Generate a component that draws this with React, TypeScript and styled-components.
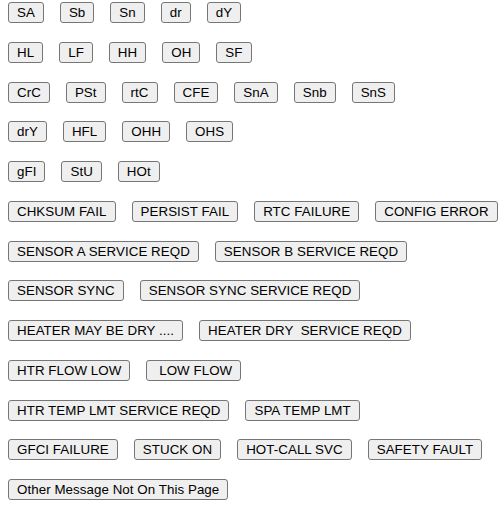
import React from 'react';
import styled, {createGlobalStyle} from 'styled-components';

const GlobalStyle = createGlobalStyle`
  body {
    margin: 0;
    background: #ffffff;
  }
`;

const Page = styled.div`
  display: flex;
  flex-direction: column;
  gap: 18.75px;
  padding: 2px 8px;
  font-family: 'Liberation Sans', Arial, sans-serif;
`;

const Row = styled.div`
  display: flex;
  gap: 16px;
`;

const MsgButton = styled.button`
  height: 21px;
  padding: 0 8px;
  margin: 0;
  border: 1px solid #767676;
  border-radius: 3px;
  background: #efefef;
  color: #000000;
  font-family: 'Liberation Sans', Arial, sans-serif;
  font-size: 13.333px;
  letter-spacing: 0.06px;
  line-height: 19px;
  white-space: pre;
  cursor: pointer;
`;

const rows: string[][] = [
  ['SA', 'Sb', 'Sn', 'dr', 'dY'],
  ['HL', 'LF', 'HH', 'OH', 'SF'],
  ['CrC', 'PSt', 'rtC', 'CFE', 'SnA', 'Snb', 'SnS'],
  ['drY', 'HFL', 'OHH', 'OHS'],
  ['gFI', 'StU', 'HOt'],
  ['CHKSUM FAIL', 'PERSIST FAIL', 'RTC FAILURE', 'CONFIG ERROR'],
  ['SENSOR A SERVICE REQD', 'SENSOR B SERVICE REQD'],
  ['SENSOR SYNC', 'SENSOR SYNC SERVICE REQD'],
  ['HEATER MAY BE DRY ....', 'HEATER DRY  SERVICE REQD'],
  ['HTR FLOW LOW', ' LOW FLOW'],
  ['HTR TEMP LMT SERVICE REQD', 'SPA TEMP LMT'],
  ['GFCI FAILURE', 'STUCK ON', 'HOT-CALL SVC', 'SAFETY FAULT'],
  ['Other Message Not On This Page'],
];

export default function App() {
  return (
    <>
      <GlobalStyle />
      <Page>
        {rows.map((row, i) => (
          <Row key={i}>
            {row.map(label => (
              <MsgButton key={label}>{label}</MsgButton>
            ))}
          </Row>
        ))}
      </Page>
    </>
  );
}
